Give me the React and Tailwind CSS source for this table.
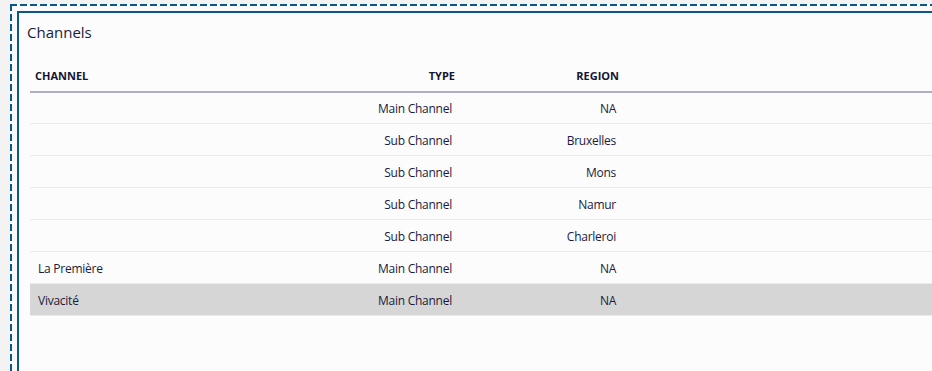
import React from "react";

const rows = [
  { channel: "", type: "Main Channel", region: "NA", first: true },
  { channel: "", type: "Sub Channel", region: "Bruxelles" },
  { channel: "", type: "Sub Channel", region: "Mons" },
  { channel: "", type: "Sub Channel", region: "Namur" },
  { channel: "", type: "Sub Channel", region: "Charleroi" },
  { channel: "La Première", type: "Main Channel", region: "NA" },
  { channel: "Vivacité", type: "Main Channel", region: "NA", selected: true },
];

export default function App() {
  return (
    <div
      className="w-[932px] h-[371px] overflow-hidden bg-[#f3f3f3] pt-[4px] pl-[10px] text-[#1b1b3d]"
      style={{ fontFamily: '"Open Sans", "Noto Sans", sans-serif' }}
    >
      <div className="w-[960px] h-[420px] pt-[7px] pl-[7px] [background:repeating-linear-gradient(90deg,#0b5789_0_7px,transparent_7px_10px)_top_left/100%_2px_no-repeat,repeating-linear-gradient(180deg,#0b5789_0_7px,transparent_7px_10px)_top_left/2px_100%_no-repeat,#fafafa]">
        <div className="h-full border-2 border-[#0b5789] bg-[#fcfcfc] pt-[9px]">
          <div className="pl-[8px] text-[15px] leading-[20px] text-[#1b1b3d]">Channels</div>
          <div className="mt-[18px] ml-[11px]">
            <div className="flex h-[33px] items-center border-b-2 border-[#aeadc4] pt-[1px] text-[11px] font-bold uppercase text-[#141433]">
              <div className="w-[270px] pl-[5px]">Channel</div>
              <div className="w-[160px] pr-[5px] text-right">Type</div>
              <div className="w-[164px] pr-[5px] text-right">Region</div>
              <div className="flex-1" />
            </div>
            {rows.map((r, i) => (
              <div
                key={i}
                className={`flex ${r.first ? "h-[31px]" : "h-[32px]"} items-center border-b border-[#ebebeb] pt-[2px] text-[12px] tracking-[-0.25px] ${
                  r.selected ? "bg-[#d6d6d6]" : ""
                }`}
              >
                <div className="w-[270px] pl-[8px]">{r.channel}</div>
                <div className="w-[160px] pr-[8px] text-right">{r.type}</div>
                <div className="w-[164px] pr-[8px] text-right">{r.region}</div>
                <div className="flex-1" />
              </div>
            ))}
          </div>
        </div>
      </div>
    </div>
  );
}
